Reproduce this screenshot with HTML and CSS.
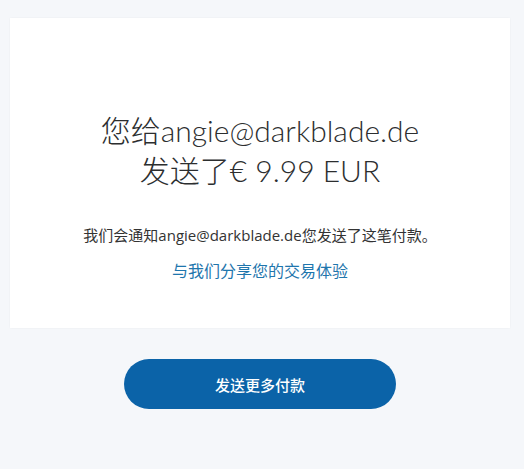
FILE: index.html
```html
<!DOCTYPE html>
<html lang="zh">
<head>
<meta charset="utf-8">
<link rel="stylesheet" href="styles.css">
</head>
<body>
<main class="page">
  <section class="card">
    <h1 class="title">
      <span class="line">您给angie@darkblade.de</span>
      <span class="line">发送了<span class="amount">€ 9.99 EUR</span></span>
    </h1>
    <p class="note">我们会通知angie@darkblade.de您发送了这笔付款。</p>
    <a class="share" href="#">与我们分享您的交易体验</a>
  </section>
  <div class="actions">
    <button class="btn" type="button">发送更多付款</button>
  </div>
</main>
</body>
</html>
```
FILE: styles.css
```css
html, body {
  margin: 0;
  padding: 0;
  background: #f5f7fa;
}
body {
  font-family: Lato, "Noto Sans CJK SC", sans-serif;
  color: #2c2e2f;
}
.page {
  width: 500px;
  padding: 18px 0 0 10px;
}
.card {
  background: #ffffff;
  box-shadow: 0 0 2px rgba(0,0,0,0.05);
  padding: 92px 20px 46px;
  display: flex;
  flex-direction: column;
  align-items: center;
  text-align: center;
}
.title {
  margin: 0;
  font-weight: 300;
  font-size: 30px;
  line-height: 40px;
  display: flex;
  flex-direction: column;
  align-items: center;
}
.amount {
  font-weight: 300;
}
.note {
  margin: 34px 0 0;
  font-family: "Open Sans", "Noto Sans CJK SC", sans-serif;
  font-size: 15px;
  line-height: 22px;
  color: #333333;
}
.share {
  margin-top: 14px;
  font-family: "Open Sans", "Noto Sans CJK SC", sans-serif;
  font-size: 16px;
  line-height: 22px;
  color: #1f76ad;
  text-decoration: none;
}
.actions {
  display: flex;
  justify-content: center;
  padding-top: 31px;
}
.btn {
  width: 272px;
  height: 50px;
  border: 0;
  border-radius: 25px;
  background: #0b63a8;
  color: #ffffff;
  font-family: "Open Sans", "Noto Sans CJK SC", sans-serif;
  font-size: 15px;
  font-weight: 500;
}
```
